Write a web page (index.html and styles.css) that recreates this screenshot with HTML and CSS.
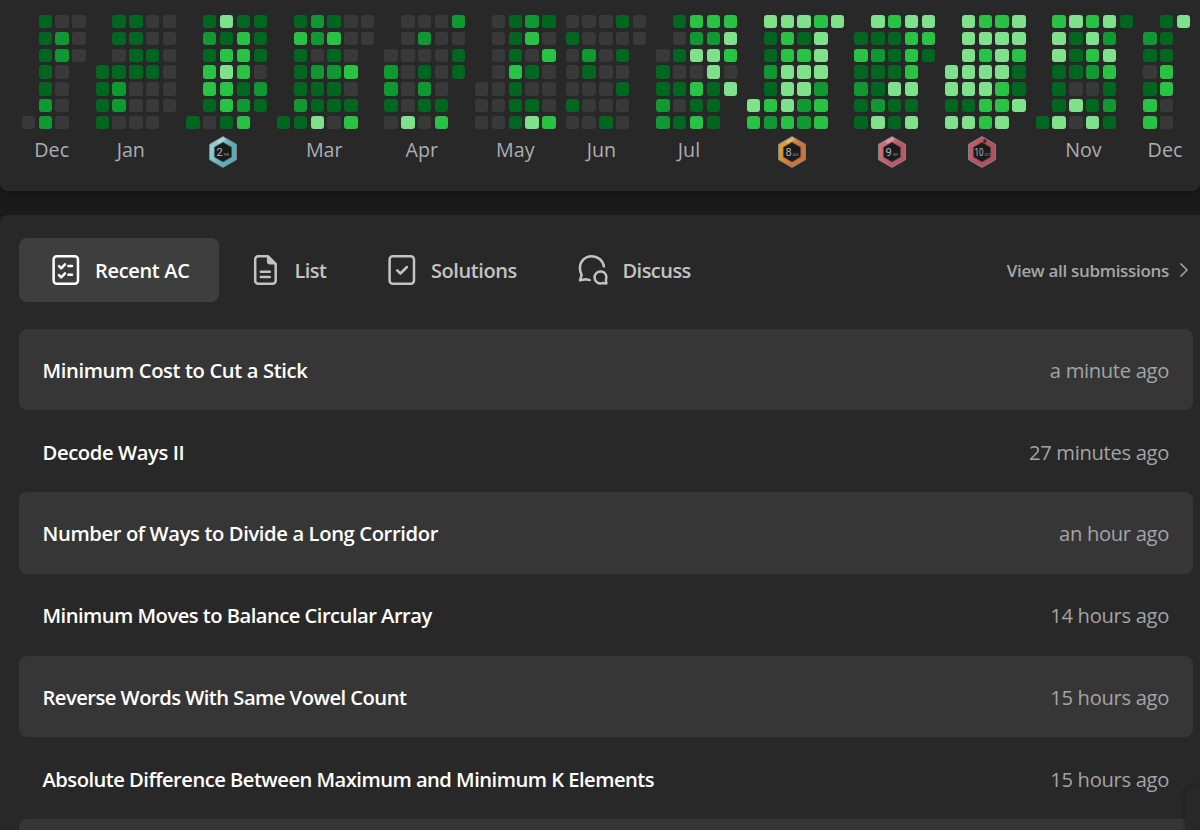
FILE: index.html
```html
<!DOCTYPE html>
<html lang="en">
<head>
<meta charset="utf-8">
<title>Profile</title>
<link rel="stylesheet" href="styles.css">
</head>
<body>
<section class="panel calendar" id="calendar"></section>
<section class="panel activity">
  <nav class="tabs">
    <a class="tab active">
      <svg class="icon" viewBox="0 0 32 32"><rect x="3.6" y="2.2" width="24.4" height="27.6" rx="3.2"/><path d="M9 12.2l2.2 2.1 3.8-3.9M9 21.2l2.2 2.1 3.8-3.9M18.4 12h3.6M18.4 20.8h3.6"/></svg>
      <span>Recent AC</span>
    </a>
    <a class="tab list">
      <svg class="icon" viewBox="0 0 32 32"><path d="M17.8 2.2H8.2a3 3 0 0 0-3 3v21.6a3 3 0 0 0 3 3h14.5a3 3 0 0 0 3-3V10z"/><path class="solid" d="M17.4 2.2v5.8a2 2 0 0 0 2 2h6.3z"/><path d="M10.8 17.8h9M10.8 23.1h9"/></svg>
      <span>List</span>
    </a>
    <a class="tab solutions">
      <svg class="icon" viewBox="0 0 32 32"><rect x="3.6" y="2.2" width="24.4" height="27.6" rx="3.2"/><path d="M11.2 16.4l3.2 3.1 6.5-6.5"/></svg>
      <span>Solutions</span>
    </a>
    <a class="tab discuss">
      <svg class="icon" viewBox="0 0 32 32"><path d="M26.9 12.4A12.2 12.2 0 0 0 14.7 2.2C7.8 2.2 2.9 7.6 2.9 14c0 3 .9 5.2 1.7 7.1L3 26.4l5.8-1.2 4 .9"/><path d="M29.4 29.4l-.5-3.3a6 6 0 1 0-3.4 3z"/></svg>
      <span>Discuss</span>
    </a>
    <a class="view-all"><span>View all submissions</span>
      <svg class="chevron" viewBox="0 0 10 16"><path d="M1.5 1.5L8 8l-6.5 6.5"/></svg>
    </a>
  </nav>
  <div class="rows">
    <div class="row"><span class="name">Minimum Cost to Cut a Stick</span><span class="time">a minute ago</span></div>
    <div class="row"><span class="name">Decode Ways II</span><span class="time">27 minutes ago</span></div>
    <div class="row"><span class="name">Number of Ways to Divide a Long Corridor</span><span class="time">an hour ago</span></div>
    <div class="row"><span class="name snug">Minimum Moves to Balance Circular Array</span><span class="time">14 hours ago</span></div>
    <div class="row"><span class="name snug">Reverse Words With Same Vowel Count</span><span class="time">15 hours ago</span></div>
    <div class="row"><span class="name snug">Absolute Difference Between Maximum and Minimum K Elements</span><span class="time">15 hours ago</span></div>
    <div class="row last"></div>
  </div>
</section>
<div class="corner"></div>
<script src="calendar.js"></script>
</body>
</html>
```
FILE: styles.css
```css
* { box-sizing: border-box; }
html, body { height: 100%; }
body {
  margin: 0;
  overflow: hidden;
  background: #1a1a1a;
  color: #fff;
  font-family: "Open Sans", "Noto Sans", sans-serif;
  display: flex;
  flex-direction: column;
  gap: 24px;
}
.panel { background: #282828; }
.calendar {
  flex: none;
  height: 191px;
  padding: 15px 0 0 21.8px;
  display: flex;
  align-items: flex-start;
  gap: 10px;
  border-radius: 0 0 8px 8px;
  box-shadow: 0 3px 12px rgba(0, 0, 0, 0.25);
}
.month { flex: none; }
.weeks {
  display: grid;
  grid-auto-rows: 13.4px;
  gap: 3.43px;
}
.day { border-radius: 3px; }
.l0 { background: #393939; }
.l1 { background: #016620; }
.l2 { background: #109932; }
.l3 { background: #28c244; }
.l4 { background: #7fe18b; }
.label {
  display: block;
  width: 0;
  height: 34px;
  margin-top: 6px;
  color: #abaeb2;
  font-size: 19.7px;
  line-height: 30px;
  white-space: nowrap;
}
.medal { display: block; width: 30px; height: 34px; margin-top: 6px; }
.medal text { font-family: Roboto, sans-serif; fill: #b4b6b8; }
.activity {
  flex: 1;
  min-height: 0;
  padding: 23px 7px 0 19px;
  border-radius: 8px 0 0 0;
}
.tabs { display: flex; height: 64px; align-items: center; }
.tab {
  display: flex;
  align-items: center;
  height: 64px;
  color: #c3c3c4;
  font-size: 20px;
  font-weight: 600;
  letter-spacing: -0.42px;
  white-space: nowrap;
}
.tab.active {
  width: 200px;
  padding-left: 30.5px;
  color: #fff;
  background: #3e3e3e;
  border-radius: 8px;
  letter-spacing: -0.32px;
}
.tab.list { width: 136.5px; padding-left: 31px; letter-spacing: -0.6px; }
.tab.solutions { width: 190px; padding-left: 30px; }
.tab.discuss { width: 160px; padding-left: 31.5px; letter-spacing: -0.54px; }
.icon {
  flex: none;
  width: 32px;
  height: 32px;
  margin-right: 13.5px;
  fill: none;
  stroke: currentColor;
  stroke-width: 2.5;
  stroke-linecap: round;
  stroke-linejoin: round;
}
.tab.list .icon { margin-right: 12.5px; }
.icon .solid { fill: currentColor; stroke-width: 1; }
.view-all {
  display: flex;
  align-items: center;
  gap: 10px;
  margin-left: auto;
  padding-right: 4px;
  color: #a5a6a8;
  font-size: 17px;
  font-weight: 600;
  letter-spacing: -0.31px;
  white-space: nowrap;
}
.view-all span { padding-top: 1px; }
.chevron { width: 10px; height: 16px; fill: none; stroke: currentColor; stroke-width: 1.5; }
.rows { margin-top: 26.5px; }
.row {
  display: flex;
  align-items: center;
  justify-content: space-between;
  height: 81.75px;
  padding: 1px 24px 0 23.5px;
  border-radius: 8px;
  font-size: 20.2px;
  white-space: nowrap;
}
.row:nth-child(odd) { background: #363636; }
.row.last { height: 11px; border-radius: 8px 8px 0 0; }
.name { font-weight: 600; letter-spacing: -0.38px; }
.name.snug { letter-spacing: -0.53px; }
.time { color: #a3a4a5; letter-spacing: -0.33px; }
.corner {
  position: absolute;
  left: 1185px;
  top: 787px;
  width: 15px;
  height: 43px;
  border-radius: 8px 0 0 0;
  background: #282828;
  box-shadow: 0 0 5px rgba(0, 0, 0, 0.3);
}
```
FILE: calendar.js
```js
// Each month: label, label offset from the month's left edge, then one string per weekday.
const months = [
  ["Dec", 12.5, ".100 .120 .120 .10. .10. .20. 020."],
  ["Jan", 21, ".1100 .1100 .0110 11110 12000 12000 1000."],
  ["2", 22.2, ".1411 .2131 .1331 .3430 .3312 .1321 1013.", "FEB", "#8fd0d2", "#58b0b7"],
  ["Mar", 29, ".12100 .32300 .1010. .1223. .1110. .2111. 11403."],
  ["Apr", 21.2, ".0002 .0200 00001 20101 2020. 1011. 0403."],
  ["May", 21, ".0121 .0130 .0103 .0310 00100 00110 00143"],
  ["Jun", 21, "00010 10000 0201. 0100. 0001. 1000. 0010."],
  ["Jul", 21.5, ".1333 .0224 01443 10040 11314 2011. 2131."],
  ["8", 30.5, ".44434 .1314. .1334. .2444. .1442. 43423. 32323.", "AUG", "#dc9f2c", "#cb7638"],
  ["9", 22.2, ".4344 11133 32131 1113. 2144. 1211. 1414.", "SEP", "#cf6e79", "#c05563"],
  ["10", 22.2, ".4334 .4444 .4343 44441 44431 11334 4434.", "OCT", "#c25a67", "#b25060"],
  ["Nov", 29.5, ".34341 .4142. .4134. .1123. .1001. .1412. 14041."],
  ["Dec", 4.5, ".14 21. 11. 03. 13. 30. 30."]
];

function medal(number, offset, name, light, dark) {
  const id = "m" + number;
  const wide = number.length > 1;
  const shine = wide
    ? '<path d="M17 3.5l3 1.9-1.5 3-2.5-1.4z" fill="#55262b"/>'
    : '<path d="M8.5 6L15.5 2l2.5 2.5-7.5 4.5z" fill="#fff" opacity=".3"/>';
  return `<svg class="medal" style="margin-left:${offset}px" viewBox="0 0 30 34">
    <defs><linearGradient id="${id}" x1="0" y1="0" x2="1" y2=".6"><stop offset=".25" stop-color="${light}"/><stop offset=".7" stop-color="${dark}"/></linearGradient></defs>
    <path d="M15 1.6L28.4 9.3v15.4L15 32.4 1.6 24.7V9.3z" fill="url(#${id})" stroke="#85898c" stroke-width="1" stroke-linejoin="round"/>
    ${shine}
    <path d="M15 7.3l8.6 4.9v9.8L15 26.9 6.4 22v-9.8z" fill="#191a1c" stroke="#5c4c4c" stroke-opacity=".6"/>
    <text x="${wide ? 7.4 : 8.5}" y="21" font-size="11" ${wide ? 'textLength="9" lengthAdjust="spacingAndGlyphs"' : ""}>${number}</text>
    <text x="${wide ? 17.4 : 15.7}" y="21" font-size="3" opacity=".8">${name}</text>
  </svg>`;
}

document.getElementById("calendar").innerHTML = months.map(([label, offset, data, name, light, dark]) => {
  const rows = data.split(" ");
  const cells = rows.join("").split("")
    .map(c => c === "." ? "<i></i>" : `<i class="day l${c}"></i>`).join("");
  const foot = name
    ? medal(label, offset, name, light, dark)
    : `<span class="label" style="margin-left:${offset}px">${label}</span>`;
  return `<div class="month"><div class="weeks" style="grid-template-columns:repeat(${rows[0].length},13.4px)">${cells}</div>${foot}</div>`;
}).join("");
```
